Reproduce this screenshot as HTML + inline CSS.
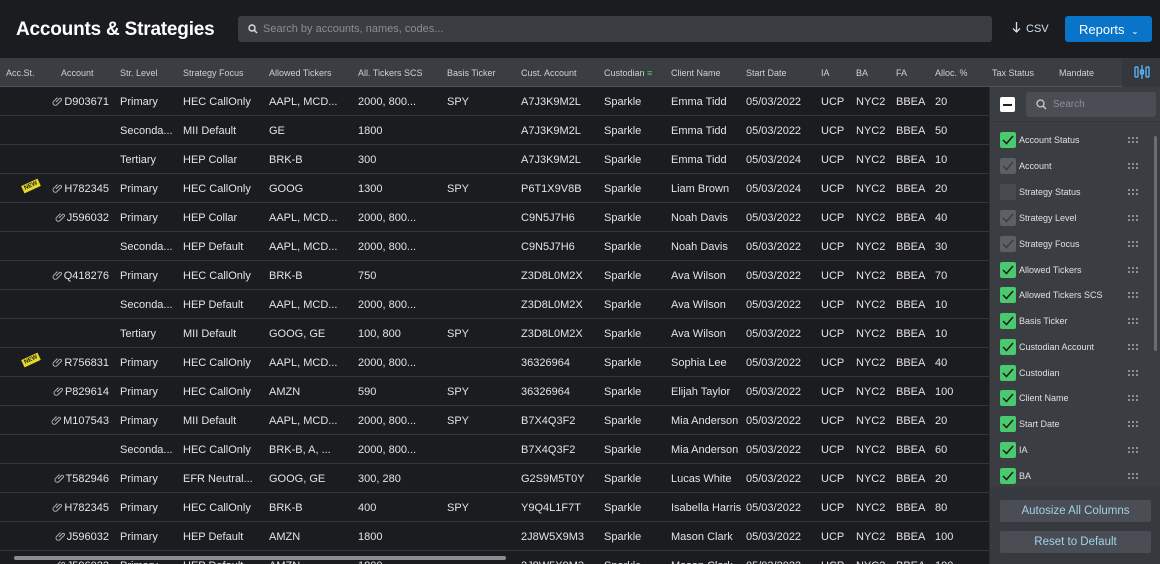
<!DOCTYPE html>
<html><head><meta charset="utf-8"><style>
*{box-sizing:border-box;margin:0;padding:0}
html{width:1160px;height:564px;overflow:hidden}
body{width:1160px;height:564px;overflow:hidden;background:#1b1c1f;font-family:"Liberation Sans",sans-serif;color:#e4e4e4;position:relative}
.top{position:absolute;left:0;top:0;width:1160px;height:58px;background:#1b1c1f}
h1{position:absolute;left:16px;top:19px;font-size:19px;font-weight:bold;color:#fff;letter-spacing:-0.2px}
.search{position:absolute;left:238px;top:16px;width:754px;height:26px;background:#3a3d42;border-radius:3px;font-size:11px;color:#8a8d92;padding:7px 0 0 25px}
.search svg{position:absolute;left:10px;top:8px}
.csv{position:absolute;left:1012px;top:22px;font-size:11px;color:#cfe0f0}
.rep{position:absolute;left:1065px;top:16px;width:87px;height:26px;background:#0a74c8;border-radius:3px;color:#fff;font-size:13px;padding:6px 0 0 14px}
.hdr{position:absolute;left:0;top:58px;width:1160px;height:29px;background:#3a3d41;border-bottom:1px solid #50535a}
.hdr span{position:absolute;top:10px;font-size:9px;color:#d0d2d5}
.rows{position:absolute;left:0;top:87px;width:989px;height:477px;overflow:hidden}
.r{height:29px;position:relative;font-size:11px;border-bottom:1px solid #33363b}
.r span{position:absolute;top:9px;white-space:nowrap}
.a{right:880px;text-align:right}
.a svg{margin-right:2px;vertical-align:-1px}
.new{position:absolute;left:22px;top:8px;background:#e8d82a;color:#222;font-size:6px;font-weight:bold;padding:1px 2px;transform:rotate(-25deg)}
.panel{position:absolute;left:989px;top:87px;width:171px;height:477px;background:#3a3d41;border-left:1px solid #2a2c30}
.pt{height:35px;border-bottom:1px solid #33363b;position:relative}
.mb{position:absolute;left:10px;top:10px;width:15px;height:15px;background:#fff;border-radius:2px}
.mb:after{content:"";position:absolute;left:3px;top:6.5px;width:9px;height:2px;background:#222}
.ps{position:absolute;left:36px;top:5px;width:130px;height:25px;background:#4a4d53;border-radius:3px;font-size:10px;color:#8d9096;padding:7px 0 0 27px}
.ps svg{position:absolute;left:10px;top:7px}
.it{position:absolute;left:10px;font-size:9px;color:#e0e0e0;height:16px}
.cb{position:absolute;left:0;top:0;width:16px;height:16px;border-radius:2px;background:#4bc96e}
.cb.g{background:#5c5f65}.cb.e{background:#484b51}
.cb svg{position:absolute;left:2px;top:3px}
.it b{position:absolute;left:19px;top:3px;font-weight:normal;white-space:nowrap}
.dots{position:absolute;left:127px;top:4px;width:12px;height:8px;background-image:radial-gradient(circle,#aaa 0.8px,transparent 1px);background-size:4px 4px}
.bot{position:absolute;left:0;top:400px;width:171px;height:77px;background:#36393d}
.btn{position:absolute;left:10px;width:151px;height:22px;background:#4a4d53;border-radius:2px;color:#9fd3ea;font-size:11.5px;text-align:center;padding-top:5px}
.sb{position:absolute;left:1154px;top:136px;width:3px;height:215px;background:#6a6d72;border-radius:2px}
.hs{position:absolute;left:14px;top:556px;width:492px;height:4px;background:#8a8d92;border-radius:2px}
</style></head><body>
<svg width="0" height="0" style="position:absolute"><defs><symbol id="lk" viewBox="0 0 10 10"><g fill="none" stroke="#b0b0b0" stroke-width="1"><path d="M4 6L7.5 2.5a1.3 1.3 0 0 1 1.8 1.8L5 8.6a2.3 2.3 0 0 1-3.3-3.3L5.5 1.5"/></g></symbol></defs></svg>
<div class="top">
<h1>Accounts &amp; Strategies</h1>
<div class="search"><svg width="10" height="10" viewBox="0 0 10 10"><circle cx="4" cy="4" r="3" stroke="#ddd" stroke-width="1.4" fill="none"/><path d="M6.3 6.3L9 9" stroke="#ddd" stroke-width="1.4"/></svg>Search by accounts, names, codes...</div>
<div class="csv"><svg width="9" height="11" viewBox="0 0 9 11" style="vertical-align:-1px;margin-right:5px"><path d="M4.5 0V10M1 6.5L4.5 10L8 6.5" stroke="#cfe0f0" stroke-width="1.3" fill="none"/></svg>CSV</div>
<div class="rep">Reports <span style="font-size:9px;margin-left:3px">&#8964;</span></div>
</div>
<div class="hdr">
<span style="left:6px">Acc.St.</span><span style="left:61px">Account</span><span style="left:120px">Str. Level</span><span style="left:183px">Strategy Focus</span><span style="left:269px">Allowed Tickers</span><span style="left:358px">All. Tickers SCS</span><span style="left:447px">Basis Ticker</span><span style="left:521px">Cust. Account</span><span style="left:604px">Custodian <b style="color:#4bc96e;font-weight:normal">&#8801;</b></span><span style="left:671px">Client Name</span><span style="left:746px">Start Date</span><span style="left:821px">IA</span><span style="left:856px">BA</span><span style="left:896px">FA</span><span style="left:935px">Alloc. %</span><span style="left:992px">Tax Status</span><span style="left:1059px">Mandate</span>
<div style="position:absolute;left:1122px;top:0;width:38px;height:29px;background:#34373b"><svg style="position:absolute;left:12px;top:7px" width="16" height="14" viewBox="0 0 16 14"><g stroke="#5aaef0" stroke-width="1.4" fill="none"><rect x="1" y="2" width="3" height="10" rx="1"/><rect x="12" y="2" width="3" height="10" rx="1"/><path d="M8 0V14"/><rect x="6.5" y="5" width="3" height="4" rx="1"/></g></svg></div>
</div>
<div class="rows">
<div class="r"><span class="a"><svg width="10" height="10"><use href="#lk"/></svg>D903671</span><span style="left:120px">Primary</span><span style="left:183px">HEC CallOnly</span><span style="left:269px">AAPL, MCD...</span><span style="left:358px">2000, 800...</span><span style="left:447px">SPY</span><span style="left:521px">A7J3K9M2L</span><span style="left:604px">Sparkle</span><span style="left:671px">Emma Tidd</span><span style="left:746px">05/03/2022</span><span style="left:821px">UCP</span><span style="left:856px">NYC2</span><span style="left:896px">BBEA</span><span style="left:935px">20</span></div>
<div class="r"><span style="left:120px">Seconda...</span><span style="left:183px">MII Default</span><span style="left:269px">GE</span><span style="left:358px">1800</span><span style="left:521px">A7J3K9M2L</span><span style="left:604px">Sparkle</span><span style="left:671px">Emma Tidd</span><span style="left:746px">05/03/2022</span><span style="left:821px">UCP</span><span style="left:856px">NYC2</span><span style="left:896px">BBEA</span><span style="left:935px">50</span></div>
<div class="r"><span style="left:120px">Tertiary</span><span style="left:183px">HEP Collar</span><span style="left:269px">BRK-B</span><span style="left:358px">300</span><span style="left:521px">A7J3K9M2L</span><span style="left:604px">Sparkle</span><span style="left:671px">Emma Tidd</span><span style="left:746px">05/03/2024</span><span style="left:821px">UCP</span><span style="left:856px">NYC2</span><span style="left:896px">BBEA</span><span style="left:935px">10</span></div>
<div class="r"><div class="new">NEW</div><span class="a"><svg width="10" height="10"><use href="#lk"/></svg>H782345</span><span style="left:120px">Primary</span><span style="left:183px">HEC CallOnly</span><span style="left:269px">GOOG</span><span style="left:358px">1300</span><span style="left:447px">SPY</span><span style="left:521px">P6T1X9V8B</span><span style="left:604px">Sparkle</span><span style="left:671px">Liam Brown</span><span style="left:746px">05/03/2024</span><span style="left:821px">UCP</span><span style="left:856px">NYC2</span><span style="left:896px">BBEA</span><span style="left:935px">20</span></div>
<div class="r"><span class="a"><svg width="10" height="10"><use href="#lk"/></svg>J596032</span><span style="left:120px">Primary</span><span style="left:183px">HEP Collar</span><span style="left:269px">AAPL, MCD...</span><span style="left:358px">2000, 800...</span><span style="left:521px">C9N5J7H6</span><span style="left:604px">Sparkle</span><span style="left:671px">Noah Davis</span><span style="left:746px">05/03/2022</span><span style="left:821px">UCP</span><span style="left:856px">NYC2</span><span style="left:896px">BBEA</span><span style="left:935px">40</span></div>
<div class="r"><span style="left:120px">Seconda...</span><span style="left:183px">HEP Default</span><span style="left:269px">AAPL, MCD...</span><span style="left:358px">2000, 800...</span><span style="left:521px">C9N5J7H6</span><span style="left:604px">Sparkle</span><span style="left:671px">Noah Davis</span><span style="left:746px">05/03/2022</span><span style="left:821px">UCP</span><span style="left:856px">NYC2</span><span style="left:896px">BBEA</span><span style="left:935px">30</span></div>
<div class="r"><span class="a"><svg width="10" height="10"><use href="#lk"/></svg>Q418276</span><span style="left:120px">Primary</span><span style="left:183px">HEC CallOnly</span><span style="left:269px">BRK-B</span><span style="left:358px">750</span><span style="left:521px">Z3D8L0M2X</span><span style="left:604px">Sparkle</span><span style="left:671px">Ava Wilson</span><span style="left:746px">05/03/2022</span><span style="left:821px">UCP</span><span style="left:856px">NYC2</span><span style="left:896px">BBEA</span><span style="left:935px">70</span></div>
<div class="r"><span style="left:120px">Seconda...</span><span style="left:183px">HEP Default</span><span style="left:269px">AAPL, MCD...</span><span style="left:358px">2000, 800...</span><span style="left:521px">Z3D8L0M2X</span><span style="left:604px">Sparkle</span><span style="left:671px">Ava Wilson</span><span style="left:746px">05/03/2022</span><span style="left:821px">UCP</span><span style="left:856px">NYC2</span><span style="left:896px">BBEA</span><span style="left:935px">10</span></div>
<div class="r"><span style="left:120px">Tertiary</span><span style="left:183px">MII Default</span><span style="left:269px">GOOG, GE</span><span style="left:358px">100, 800</span><span style="left:447px">SPY</span><span style="left:521px">Z3D8L0M2X</span><span style="left:604px">Sparkle</span><span style="left:671px">Ava Wilson</span><span style="left:746px">05/03/2022</span><span style="left:821px">UCP</span><span style="left:856px">NYC2</span><span style="left:896px">BBEA</span><span style="left:935px">10</span></div>
<div class="r"><div class="new">NEW</div><span class="a"><svg width="10" height="10"><use href="#lk"/></svg>R756831</span><span style="left:120px">Primary</span><span style="left:183px">HEC CallOnly</span><span style="left:269px">AAPL, MCD...</span><span style="left:358px">2000, 800...</span><span style="left:521px">36326964</span><span style="left:604px">Sparkle</span><span style="left:671px">Sophia Lee</span><span style="left:746px">05/03/2022</span><span style="left:821px">UCP</span><span style="left:856px">NYC2</span><span style="left:896px">BBEA</span><span style="left:935px">40</span></div>
<div class="r"><span class="a"><svg width="10" height="10"><use href="#lk"/></svg>P829614</span><span style="left:120px">Primary</span><span style="left:183px">HEC CallOnly</span><span style="left:269px">AMZN</span><span style="left:358px">590</span><span style="left:447px">SPY</span><span style="left:521px">36326964</span><span style="left:604px">Sparkle</span><span style="left:671px">Elijah Taylor</span><span style="left:746px">05/03/2022</span><span style="left:821px">UCP</span><span style="left:856px">NYC2</span><span style="left:896px">BBEA</span><span style="left:935px">100</span></div>
<div class="r"><span class="a"><svg width="10" height="10"><use href="#lk"/></svg>M107543</span><span style="left:120px">Primary</span><span style="left:183px">MII Default</span><span style="left:269px">AAPL, MCD...</span><span style="left:358px">2000, 800...</span><span style="left:447px">SPY</span><span style="left:521px">B7X4Q3F2</span><span style="left:604px">Sparkle</span><span style="left:671px">Mia Anderson</span><span style="left:746px">05/03/2022</span><span style="left:821px">UCP</span><span style="left:856px">NYC2</span><span style="left:896px">BBEA</span><span style="left:935px">20</span></div>
<div class="r"><span style="left:120px">Seconda...</span><span style="left:183px">HEC CallOnly</span><span style="left:269px">BRK-B, A, ...</span><span style="left:358px">2000, 800...</span><span style="left:521px">B7X4Q3F2</span><span style="left:604px">Sparkle</span><span style="left:671px">Mia Anderson</span><span style="left:746px">05/03/2022</span><span style="left:821px">UCP</span><span style="left:856px">NYC2</span><span style="left:896px">BBEA</span><span style="left:935px">60</span></div>
<div class="r"><span class="a"><svg width="10" height="10"><use href="#lk"/></svg>T582946</span><span style="left:120px">Primary</span><span style="left:183px">EFR Neutral...</span><span style="left:269px">GOOG, GE</span><span style="left:358px">300, 280</span><span style="left:521px">G2S9M5T0Y</span><span style="left:604px">Sparkle</span><span style="left:671px">Lucas White</span><span style="left:746px">05/03/2022</span><span style="left:821px">UCP</span><span style="left:856px">NYC2</span><span style="left:896px">BBEA</span><span style="left:935px">20</span></div>
<div class="r"><span class="a"><svg width="10" height="10"><use href="#lk"/></svg>H782345</span><span style="left:120px">Primary</span><span style="left:183px">HEC CallOnly</span><span style="left:269px">BRK-B</span><span style="left:358px">400</span><span style="left:447px">SPY</span><span style="left:521px">Y9Q4L1F7T</span><span style="left:604px">Sparkle</span><span style="left:671px">Isabella Harris</span><span style="left:746px">05/03/2022</span><span style="left:821px">UCP</span><span style="left:856px">NYC2</span><span style="left:896px">BBEA</span><span style="left:935px">80</span></div>
<div class="r"><span class="a"><svg width="10" height="10"><use href="#lk"/></svg>J596032</span><span style="left:120px">Primary</span><span style="left:183px">HEP Default</span><span style="left:269px">AMZN</span><span style="left:358px">1800</span><span style="left:521px">2J8W5X9M3</span><span style="left:604px">Sparkle</span><span style="left:671px">Mason Clark</span><span style="left:746px">05/03/2022</span><span style="left:821px">UCP</span><span style="left:856px">NYC2</span><span style="left:896px">BBEA</span><span style="left:935px">100</span></div>
<div class="r"><span class="a"><svg width="10" height="10"><use href="#lk"/></svg>J596032</span><span style="left:120px">Primary</span><span style="left:183px">HEP Default</span><span style="left:269px">AMZN</span><span style="left:358px">1800</span><span style="left:521px">2J8W5X9M3</span><span style="left:604px">Sparkle</span><span style="left:671px">Mason Clark</span><span style="left:746px">05/03/2022</span><span style="left:821px">UCP</span><span style="left:856px">NYC2</span><span style="left:896px">BBEA</span><span style="left:935px">100</span></div>
</div>
<div class="hs"></div>
<div class="panel">
<div class="pt"><div class="mb"></div><div class="ps"><svg width="11" height="11" viewBox="0 0 11 11"><circle cx="4.5" cy="4.5" r="3.5" stroke="#ccc" stroke-width="1.3" fill="none"/><path d="M7 7L10 10" stroke="#ccc" stroke-width="1.3"/></svg>Search</div></div>
<div class="it" style="top:45px"><div class="cb"><svg width="12" height="10" viewBox="0 0 12 10"><path d="M1 5L4.5 8.5L11 1" stroke="#1b1c1f" stroke-width="1.5" fill="none"/></svg></div><b>Account Status</b><div class="dots"></div></div>
<div class="it" style="top:71px"><div class="cb g"><svg width="12" height="10" viewBox="0 0 12 10"><path d="M1 5L4.5 8.5L11 1" stroke="#3a3d41" stroke-width="1.5" fill="none"/></svg></div><b>Account</b><div class="dots"></div></div>
<div class="it" style="top:97px"><div class="cb e"></div><b>Strategy Status</b><div class="dots"></div></div>
<div class="it" style="top:123px"><div class="cb g"><svg width="12" height="10" viewBox="0 0 12 10"><path d="M1 5L4.5 8.5L11 1" stroke="#3a3d41" stroke-width="1.5" fill="none"/></svg></div><b>Strategy Level</b><div class="dots"></div></div>
<div class="it" style="top:149px"><div class="cb g"><svg width="12" height="10" viewBox="0 0 12 10"><path d="M1 5L4.5 8.5L11 1" stroke="#3a3d41" stroke-width="1.5" fill="none"/></svg></div><b>Strategy Focus</b><div class="dots"></div></div>
<div class="it" style="top:175px"><div class="cb"><svg width="12" height="10" viewBox="0 0 12 10"><path d="M1 5L4.5 8.5L11 1" stroke="#1b1c1f" stroke-width="1.5" fill="none"/></svg></div><b>Allowed Tickers</b><div class="dots"></div></div>
<div class="it" style="top:200px"><div class="cb"><svg width="12" height="10" viewBox="0 0 12 10"><path d="M1 5L4.5 8.5L11 1" stroke="#1b1c1f" stroke-width="1.5" fill="none"/></svg></div><b>Allowed Tickers SCS</b><div class="dots"></div></div>
<div class="it" style="top:226px"><div class="cb"><svg width="12" height="10" viewBox="0 0 12 10"><path d="M1 5L4.5 8.5L11 1" stroke="#1b1c1f" stroke-width="1.5" fill="none"/></svg></div><b>Basis Ticker</b><div class="dots"></div></div>
<div class="it" style="top:252px"><div class="cb"><svg width="12" height="10" viewBox="0 0 12 10"><path d="M1 5L4.5 8.5L11 1" stroke="#1b1c1f" stroke-width="1.5" fill="none"/></svg></div><b>Custodian Account</b><div class="dots"></div></div>
<div class="it" style="top:278px"><div class="cb"><svg width="12" height="10" viewBox="0 0 12 10"><path d="M1 5L4.5 8.5L11 1" stroke="#1b1c1f" stroke-width="1.5" fill="none"/></svg></div><b>Custodian</b><div class="dots"></div></div>
<div class="it" style="top:303px"><div class="cb"><svg width="12" height="10" viewBox="0 0 12 10"><path d="M1 5L4.5 8.5L11 1" stroke="#1b1c1f" stroke-width="1.5" fill="none"/></svg></div><b>Client Name</b><div class="dots"></div></div>
<div class="it" style="top:329px"><div class="cb"><svg width="12" height="10" viewBox="0 0 12 10"><path d="M1 5L4.5 8.5L11 1" stroke="#1b1c1f" stroke-width="1.5" fill="none"/></svg></div><b>Start Date</b><div class="dots"></div></div>
<div class="it" style="top:355px"><div class="cb"><svg width="12" height="10" viewBox="0 0 12 10"><path d="M1 5L4.5 8.5L11 1" stroke="#1b1c1f" stroke-width="1.5" fill="none"/></svg></div><b>IA</b><div class="dots"></div></div>
<div class="it" style="top:381px"><div class="cb"><svg width="12" height="10" viewBox="0 0 12 10"><path d="M1 5L4.5 8.5L11 1" stroke="#1b1c1f" stroke-width="1.5" fill="none"/></svg></div><b>BA</b><div class="dots"></div></div>
<div class="bot"><div class="btn" style="top:13px">Autosize All Columns</div><div class="btn" style="top:44px">Reset to Default</div></div>
</div>
<div class="sb"></div>
</body></html>
